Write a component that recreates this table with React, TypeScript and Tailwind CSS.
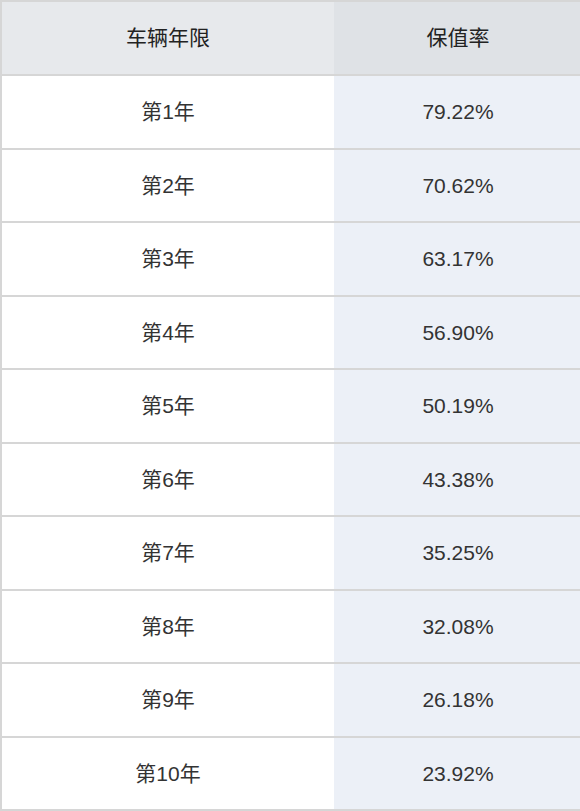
const rows: [string, string][] = [
  ['第1年', '79.22%'],
  ['第2年', '70.62%'],
  ['第3年', '63.17%'],
  ['第4年', '56.90%'],
  ['第5年', '50.19%'],
  ['第6年', '43.38%'],
  ['第7年', '35.25%'],
  ['第8年', '32.08%'],
  ['第9年', '26.18%'],
  ['第10年', '23.92%'],
];

export default function App() {
  return (
    <div
      className="w-[580px] h-[811px] overflow-hidden bg-white text-[21px] text-[#333]"
      style={{ fontFamily: '"Liberation Sans", Arial, "Noto Sans CJK SC", sans-serif' }}
    >
      <div className="w-[582px] border-t-2 border-l-2 border-[#d6d6d6]">
        {/* header */}
        <div className="flex h-[74px] border-b-2 border-[#d6d6d6] text-[#222]">
          <div className="w-[332px] flex items-center justify-center bg-[#e7e9ec]">车辆年限</div>
          <div className="flex-1 flex items-center justify-center bg-[#dfe2e6]">保值率</div>
        </div>
        {rows.map(([year, rate]) => (
          <div key={year} className="flex h-[73.5px] border-b-2 border-[#d6d6d6]">
            <div className="w-[332px] flex items-center justify-center bg-white">{year}</div>
            <div className="flex-1 flex items-center justify-center bg-[#ecf0f7]">{rate}</div>
          </div>
        ))}
      </div>
    </div>
  );
}
